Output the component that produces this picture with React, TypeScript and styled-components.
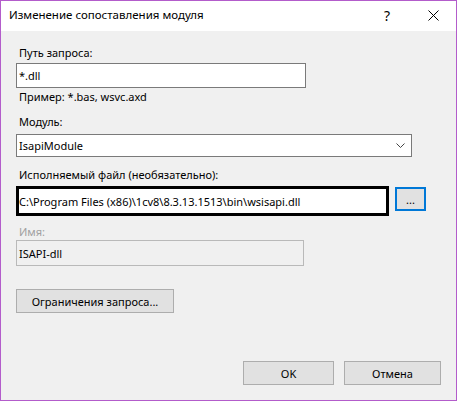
import React from "react";
import styled, { createGlobalStyle } from "styled-components";

const Global = createGlobalStyle`
  html, body { margin: 0; padding: 0; background: #f0f0f0; }
  body { width: 457px; height: 401px; overflow: hidden; }
  * { box-sizing: border-box; }
`;

const FONT = `"Noto Sans", "Open Sans", sans-serif`;

const Window = styled.div`
  width: 457px;
  height: 401px;
  border: 1px solid #b35ccb;
  display: flex;
  flex-direction: column;
  font-family: ${FONT};
  font-size: 11px;
  color: #000;
`;

const TitleBar = styled.div`
  height: 30px;
  background: #fff;
  display: flex;
  align-items: center;
  padding-left: 8px;
  flex: none;
`;

const Title = styled.div`
  flex: 1;
  font-size: 11.5px;
  line-height: 16px;
  padding-bottom: 3px;
`;

const TitleButton = styled.div`
  width: 46px;
  height: 30px;
  display: flex;
  align-items: center;
  justify-content: center;
  font-size: 14px;
  padding-bottom: 1px;
  color: #000;
`;

const Body = styled.div`
  flex: 1;
  background: #f0f0f0;
  padding: 14px 15px 0 15px;
  display: flex;
  flex-direction: column;
`;

const Label = styled.div<{ $disabled?: boolean; $mt?: number }>`
  line-height: 16px;
  height: 16px;
  padding-left: 3px;
  margin-top: ${(p) => p.$mt ?? 0}px;
  color: ${(p) => (p.$disabled ? "#a0a0a0" : "#000")};
  white-space: nowrap;
`;

const TextBox = styled.div<{ $w: number; $h: number; $mt?: number; $readonly?: boolean }>`
  width: ${(p) => p.$w}px;
  height: ${(p) => p.$h}px;
  margin-top: ${(p) => p.$mt ?? 0}px;
  border: 1px solid ${(p) => (p.$readonly ? "#b9b9b9" : "#7a7a7a")};
  background: ${(p) => (p.$readonly ? "#f0f0f0" : "#fff")};
  display: flex;
  align-items: center;
  padding-left: 2px;
  white-space: nowrap;
  flex: none;
`;

const Select = styled.div`
  width: 396px;
  height: 23px;
  margin-top: 4px;
  border: 1px solid #7a7a7a;
  background: #fff;
  display: flex;
  align-items: center;
  padding: 0 6px 0 2px;
`;

const SelectText = styled.div`
  flex: 1;
`;

const PathRow = styled.div`
  display: flex;
  align-items: flex-start;
  gap: 6px;
  margin-top: 3px;
`;

const FocusBox = styled.div`
  width: 373px;
  height: 30px;
  border: 3px solid #000;
  background: #fff;
  display: flex;
  align-items: center;
  padding-left: 0px;
  white-space: nowrap;
`;

const Button = styled.div<{ $w: number; $focus?: boolean; $mt?: number }>`
  width: ${(p) => p.$w}px;
  height: 24px;
  margin-top: ${(p) => p.$mt ?? 0}px;
  background: #e1e1e1;
  border: ${(p) => (p.$focus ? "2px solid #0078d7" : "1px solid #adadad")};
  display: flex;
  align-items: center;
  justify-content: center;
  white-space: nowrap;
  flex: none;
`;

const Footer = styled.div`
  display: flex;
  justify-content: flex-end;
  gap: 10px;
  margin-top: auto;
  margin-bottom: 15px;
`;

export default function App() {
  return (
    <>
      <Global />
      <Window>
        <TitleBar>
          <Title>Изменение сопоставления модуля</Title>
          <TitleButton>?</TitleButton>
          <TitleButton>
            <svg width="11" height="11" viewBox="0 0 11 11">
              <path d="M0.5 0.5 L10.5 10.5 M10.5 0.5 L0.5 10.5" stroke="#000" strokeWidth="1" />
            </svg>
          </TitleButton>
        </TitleBar>
        <Body>
          <Label>Путь запроса:</Label>
          <TextBox $w={290} $h={25} $mt={2}>*.dll</TextBox>
          <Label $mt={1}>Пример: *.bas, wsvc.axd</Label>
          <Label $mt={9}>Модуль:</Label>
          <Select>
            <SelectText>IsapiModule</SelectText>
            <svg width="9" height="5" viewBox="0 0 9 5">
              <path d="M0.5 0.5 L4.5 4.5 L8.5 0.5" fill="none" stroke="#444" strokeWidth="1" />
            </svg>
          </Select>
          <Label $mt={10}>Исполняемый файл (необязательно):</Label>
          <PathRow>
            <FocusBox>C:\Program Files (x86)\1cv8\8.3.13.1513\bin\wsisapi.dll</FocusBox>
            <Button $w={31} $focus $mt={1}>...</Button>
          </PathRow>
          <Label $disabled $mt={8}>Имя:</Label>
          <TextBox $w={288} $h={26} $readonly>ISAPI-dll</TextBox>
          <Button $w={158} $mt={23}>Ограничения запроса...</Button>
          <Footer>
            <Button $w={91}>OK</Button>
            <Button $w={97}>Отмена</Button>
          </Footer>
        </Body>
      </Window>
    </>
  );
}
